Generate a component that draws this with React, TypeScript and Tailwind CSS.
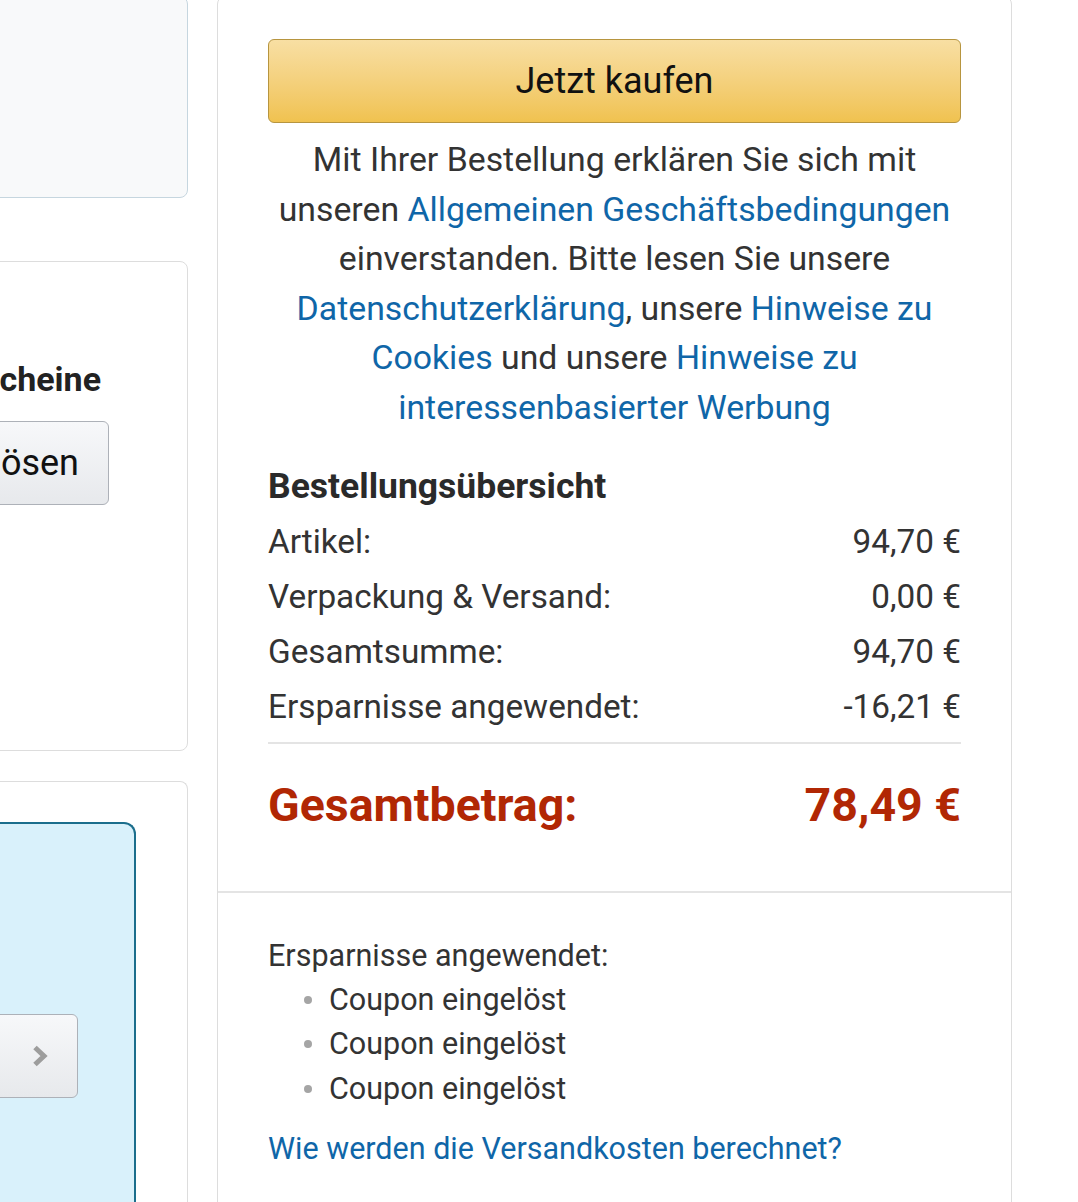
import React from 'react';

const Link: React.FC<{ children: React.ReactNode }> = ({ children }) => (
  <a href="#" className="text-[#0f66a8] no-underline">{children}</a>
);

export default function App() {
  const rows = [
    { label: 'Artikel:', value: '94,70 €' },
    { label: 'Verpackung & Versand:', value: '0,00 €' },
    { label: 'Gesamtsumme:', value: '94,70 €' },
    { label: 'Ersparnisse angewendet:', value: '-16,21 €' },
  ];

  return (
    <div className="flex items-start w-[1078px] h-[1202px] overflow-hidden bg-white font-['Roboto',sans-serif] text-[#333]">
      {/* Left column (cut off) */}
      <div className="w-[188px] h-[1240px] shrink-0 flex flex-col overflow-hidden">
        <div className="h-[202px] -mt-[4px] -ml-[20px] rounded-lg border border-[#c6d6df] bg-[#f8f9fa]" />

        <div className="mt-[63px] h-[490px] -ml-[300px] rounded-lg border border-[#dddddd] bg-white flex flex-col items-end">
          <div className="mt-[95px] pr-[86px] text-[34px] font-bold leading-[44px] text-[#222] whitespace-nowrap">
            Geschenkgutscheine
          </div>
          <div className="mt-[20px] mr-[78px] h-[84px] w-[240px] rounded-md border border-[#adb1b8] bg-gradient-to-b from-[#f7f8fa] to-[#e7e9ec] flex items-center justify-end pr-[29px] text-[36px] text-[#111] whitespace-nowrap">
            Einlösen
          </div>
        </div>

        <div className="mt-[30px] flex-1 -ml-[20px] rounded-t-lg border border-b-0 border-[#dddddd] bg-white flex flex-col items-end pt-[40px]">
          <div className="mr-[51px] w-[200px] flex-1 rounded-tr-xl border-t-2 border-r-2 border-[#1b6e8c] bg-[#d9f1fb] flex flex-col items-end">
            <div className="mt-[190px] mr-[56px] w-[120px] h-[84px] rounded-md border border-[#adb1b8] bg-gradient-to-b from-[#f7f8fa] to-[#e7e9ec] flex items-center justify-end pr-[28px]">
              <svg width="18" height="24" viewBox="0 0 18 24" fill="none">
                <path d="M4 3.5 L13 12 L4 20.5" stroke="#9d9d9d" strokeWidth="5" strokeLinejoin="miter" />
              </svg>
            </div>
          </div>
        </div>
      </div>

      {/* Right panel */}
      <div className="ml-[29px] w-[795px] h-[1240px] shrink-0 -mt-[4px] rounded-lg border border-[#dddddd] flex flex-col">
        <div className="px-[50px] pt-[42px]">
          <button className="w-full h-[84px] rounded-md border border-[#b7953f] bg-gradient-to-b from-[#f8dfa3] to-[#f0c24f] text-[36px] text-[#111] flex items-center justify-center">
            Jetzt kaufen
          </button>

          <p className="mt-[12px] text-center text-[33.8px] leading-[49.6px]">
            Mit Ihrer Bestellung erklären Sie sich mit
            <br />
            unseren <Link>Allgemeinen Geschäftsbedingungen</Link>
            <br />
            einverstanden. Bitte lesen Sie unsere
            <br />
            <Link>Datenschutzerklärung</Link>, unsere <Link>Hinweise zu</Link>
            <br />
            <Link>Cookies</Link> und unsere <Link>Hinweise zu</Link>
            <br />
            <Link>interessenbasierter Werbung</Link>
          </p>

          <h3 className="mt-[31px] text-[35.5px] font-bold leading-[44px] text-[#2a2a2a]">
            Bestellungsübersicht
          </h3>

          <div className="mt-[6px] flex flex-col">
            {rows.map((r) => (
              <div key={r.label} className="flex justify-between text-[33.3px] leading-[55px]">
                <span>{r.label}</span>
                <span>{r.value}</span>
              </div>
            ))}
          </div>

          <div className="mt-[8px] h-[2px] bg-[#e4e4e4]" />

          <div className="mt-[33px] flex justify-between text-[46.5px] font-bold leading-[56px] text-[#b12704]">
            <span>Gesamtbetrag:</span>
            <span>78,49 €</span>
          </div>
        </div>

        <div className="mt-[58px] h-[2px] bg-[#e4e4e4]" />

        <div className="px-[50px] pt-[41px] text-[30.5px]">
          <div className="leading-[44px]">Ersparnisse angewendet:</div>
          <ul className="flex flex-col">
            {[0, 1, 2].map((i) => (
              <li key={i} className="flex items-center leading-[44.5px] pl-[36px]">
                <span className="w-[8px] h-[8px] rounded-full bg-[#a5a5a5] mr-[17px]" />
                Coupon eingelöst
              </li>
            ))}
          </ul>
          <div className="mt-[16px] leading-[44px]">
            <Link>Wie werden die Versandkosten berechnet?</Link>
          </div>
        </div>
      </div>
    </div>
  );
}
